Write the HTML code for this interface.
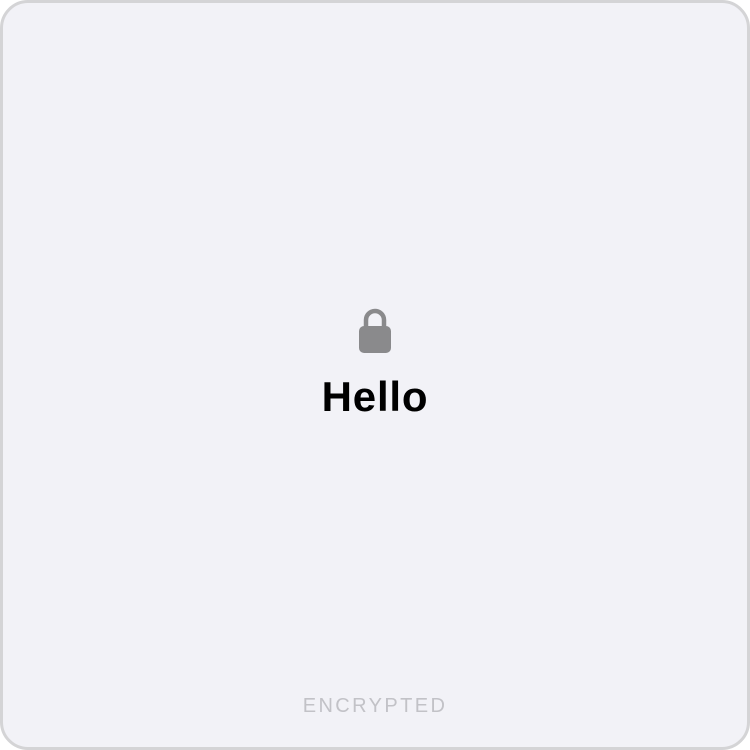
<!DOCTYPE html>
<html><head><style>
html,body{margin:0;padding:0;background:#fff;}
.card{position:absolute;left:0;top:0;width:744px;height:744px;border:3px solid #d4d4d6;border-radius:28px;background:#f2f2f7;}
.lock{position:absolute;left:358px;top:307px;}
.hello{position:absolute;left:0;width:750px;top:373px;text-align:center;font:bold 42px "Liberation Sans",sans-serif;letter-spacing:0.8px;color:#000;}
.enc{position:absolute;left:0;width:750px;top:695px;text-align:center;font:20px "Liberation Sans",sans-serif;letter-spacing:2.4px;color:#c2c2c7;}
</style></head><body>
<div class="card"></div>
<svg class="lock" width="34" height="48" viewBox="0 0 34 48">
<path d="M8 20 V13 a9 9 0 0 1 18 0 V20" fill="none" stroke="#8a8a8c" stroke-width="4.5"/>
<rect x="1" y="19" width="32" height="27" rx="5" fill="#8a8a8c"/>
</svg>
<div class="hello">Hello</div>
<div class="enc">ENCRYPTED</div>
</body></html>
